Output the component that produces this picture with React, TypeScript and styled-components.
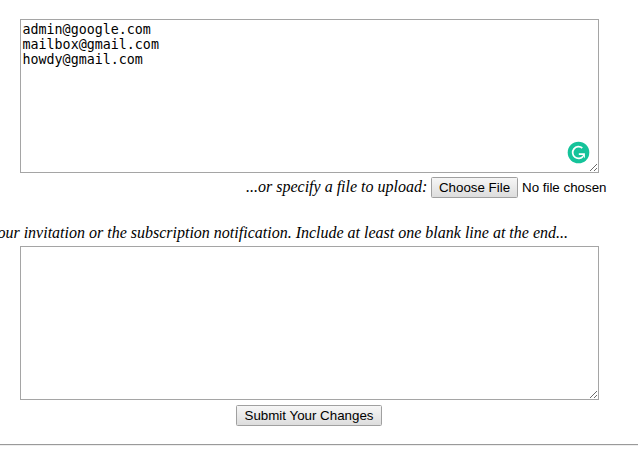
import React from "react";
import styled, { createGlobalStyle } from "styled-components";

const GlobalStyle = createGlobalStyle`
  * { box-sizing: border-box; }
  html, body { margin: 0; padding: 0; background: #fff; overflow: hidden; }
`;

const Page = styled.main`
  width: 638px;
  height: 449px;
  padding-top: 19px;
  overflow: hidden;
  color: #000;
  font: 16px/18px "Liberation Serif", serif;
`;

const Field = styled.div`
  position: relative;
  width: 579px;
  height: 154px;
  margin-left: 20px;
`;

const TextArea = styled.textarea`
  display: block;
  width: 100%;
  height: 100%;
  margin: 0;
  padding: 2px 2px 2px 1.5px;
  border: 1px solid #a5a5a5;
  border-radius: 0;
  outline: none;
  resize: none;
  background: #fff;
  color: #000;
  font: 13.333px/15px "DejaVu Sans Mono", monospace;
`;

const Grip = styled.svg`
  position: absolute;
  right: 1px;
  bottom: 1px;
`;

const Badge = styled.svg`
  position: absolute;
  right: 9px;
  bottom: 9px;
`;

const UploadRow = styled.div`
  display: flex;
  align-items: flex-start;
  height: 51px;
  padding: 4px 0 0 246px;
  white-space: nowrap;
`;

const UploadLabel = styled.em`
  width: 185px;
  padding-top: 1px;
`;

const Button = styled.button<{ $width: number }>`
  flex: none;
  width: ${(p) => p.$width}px;
  height: 21px;
  margin: 0;
  padding: 0;
  border: 1px solid #a0a0a0;
  border-radius: 1.5px;
  background: linear-gradient(#f6f6f6, #dddddd);
  color: #000;
  font: 13.333px/18px "Liberation Sans", sans-serif;
  white-space: nowrap;
`;

const FileName = styled.span`
  padding: 2px 0 0 4px;
  font: 13.333px/18px "Liberation Sans", sans-serif;
`;

const Instruction = styled.em`
  display: flex;
  justify-content: flex-end;
  width: 568px;
  height: 22px;
  white-space: nowrap;
`;

const SubmitRow = styled.div`
  display: flex;
  height: 44px;
  padding: 5px 0 0 236px;
`;

const Divider = styled.hr`
  height: 2px;
  margin: 0;
  border: 0;
  border-top: 1px solid #9a9a9a;
  border-bottom: 1px solid #eeeeee;
`;

function ResizeGrip() {
  return (
    <Grip width="9" height="9" viewBox="0 0 9 9" fill="none" stroke="#6b6b6b" shapeRendering="crispEdges" aria-hidden="true">
      <path d="M0.5 8.5L7.5 1.5M4.5 8.5L7.5 5.5" />
    </Grip>
  );
}

function WritingBadge() {
  return (
    <Badge width="23" height="23" viewBox="0 0 23 23" aria-hidden="true">
      <circle cx="11.5" cy="11.5" r="10.8" fill="#15c39a" />
      <path d="M15.3 7A5.9 5.9 0 1 0 16.2 15.2" fill="none" stroke="#fff" strokeWidth="1.7" />
      <path d="M11.8 12.2H17.9V17.2L15.4 14H11.8Z" fill="#fff" />
    </Badge>
  );
}

export default function App() {
  return (
    <>
      <GlobalStyle />
      <Page>
        <Field>
          <TextArea
            aria-label="Email addresses"
            spellCheck={false}
            defaultValue={"admin@google.com\nmailbox@gmail.com\nhowdy@gmail.com"}
          />
          <WritingBadge />
          <ResizeGrip />
        </Field>
        <UploadRow>
          <UploadLabel>...or specify a file to upload:</UploadLabel>
          <Button type="button" $width={87}>Choose File</Button>
          <FileName>No file chosen</FileName>
        </UploadRow>
        <Instruction>
          our invitation or the subscription notification. Include at least one blank line at the end...
        </Instruction>
        <Field>
          <TextArea aria-label="Invitation text" spellCheck={false} />
          <ResizeGrip />
        </Field>
        <SubmitRow>
          <Button type="button" $width={146}>Submit Your Changes</Button>
        </SubmitRow>
        <Divider />
      </Page>
    </>
  );
}
